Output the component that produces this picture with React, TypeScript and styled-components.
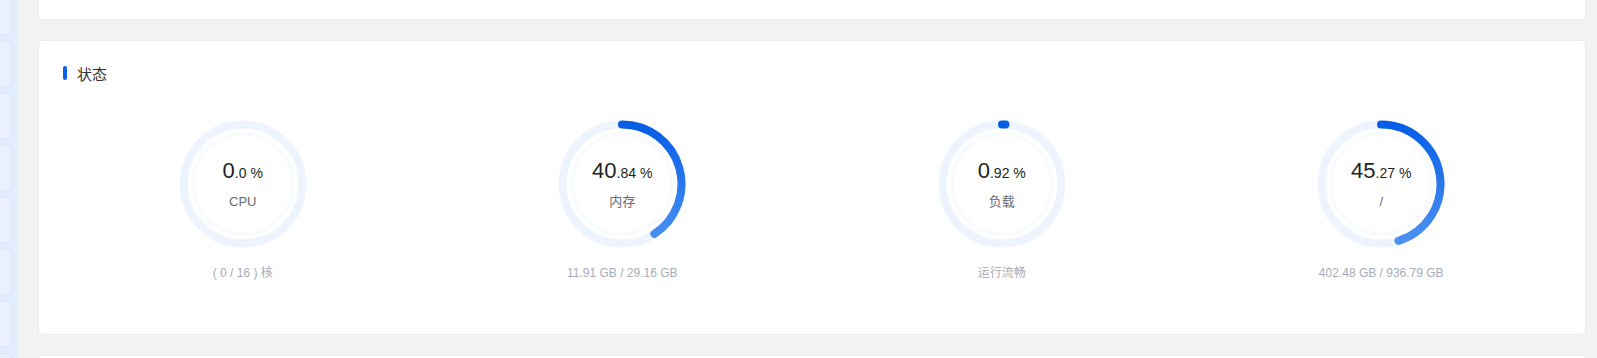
import styled, { createGlobalStyle } from 'styled-components';

const GlobalStyle = createGlobalStyle`
  html, body {
    margin: 0;
    padding: 0;
    background: #f2f2f3;
    font-family: "Liberation Sans", Arial, "Noto Sans CJK SC", sans-serif;
    overflow: hidden;
  }
`;

type Gauge = {
  whole: string;
  fraction: string;
  percent: number;
  label: string;
  detail: string;
};

const gauges: Gauge[] = [
  { whole: '0', fraction: '.0', percent: 0, label: 'CPU', detail: '( 0 / 16 ) 核' },
  { whole: '40', fraction: '.84', percent: 40.84, label: '内存', detail: '11.91 GB / 29.16 GB' },
  { whole: '0', fraction: '.92', percent: 0.92, label: '负载', detail: '运行流畅' },
  { whole: '45', fraction: '.27', percent: 45.27, label: '/', detail: '402.48 GB / 936.79 GB' },
];

const R = 59.5;
const C = 64;

// arc from 12 o'clock, clockwise
const arcPath = (percent: number) => {
  const a = (percent / 100) * 2 * Math.PI;
  const x = C + R * Math.sin(a);
  const y = C - R * Math.cos(a);
  const large = percent > 50 ? 1 : 0;
  return `M ${C} ${C - R} A ${R} ${R} 0 ${large} 1 ${x.toFixed(2)} ${y.toFixed(2)}`;
};

const Ring = ({ percent, id }: { percent: number; id: string }) => (
  <svg width="128" height="128" viewBox="0 0 128 128">
    <defs>
      <linearGradient id={id} x1="0" y1="4" x2="0" y2="124" gradientUnits="userSpaceOnUse">
        <stop offset="0" stopColor="#075de6" />
        <stop offset="1" stopColor="#4d93f2" />
      </linearGradient>
    </defs>
    <circle cx={C} cy={C} r={R} fill="none" stroke="#eef4fd" strokeWidth="8" />
    <circle cx={C} cy={C} r="50" fill="none" stroke="#f7faff" strokeWidth="3" />
    {percent > 0 && (
      <path
        d={arcPath(percent)}
        fill="none"
        stroke={`url(#${id})`}
        strokeWidth="8"
        strokeLinecap="round"
      />
    )}
  </svg>
);

const App = () => (
  <>
    <GlobalStyle />
    <Page>
      <Sidebar>
        {Array.from({ length: 8 }).map((_, i) => (
          <SideItem key={i} />
        ))}
      </Sidebar>
      <Main>
        <TopCard />
        <Card>
          <Title>
            <TitleBar />
            状态
          </Title>
          <GaugeGrid>
            {gauges.map((g, i) => (
              <GaugeCell key={g.label}>
                <Dial>
                  <Ring percent={g.percent} id={`ring-${i}`} />
                  <Readout>
                    <Value>
                      <Big>{g.whole}</Big>
                      <Small>{g.fraction} %</Small>
                    </Value>
                    <Label>{g.label}</Label>
                  </Readout>
                </Dial>
                <Detail>{g.detail}</Detail>
              </GaugeCell>
            ))}
          </GaugeGrid>
        </Card>
        <Card />
      </Main>
    </Page>
  </>
);

const Page = styled.div`
  display: flex;
  height: 358px;
  overflow: hidden;
`;

const Sidebar = styled.div`
  width: 18px;
  flex-shrink: 0;
  background: #e2ecfc;
  display: flex;
  flex-direction: column;
  gap: 6px;
  margin-top: -11px;
  padding-right: 7px;
  box-sizing: border-box;
`;

const SideItem = styled.div`
  height: 46px;
  flex-shrink: 0;
  background: #ebf2fe;
  border: 1px solid #dce7fa;
  border-left: none;
  border-radius: 0 4px 4px 0;
  box-sizing: border-box;
`;

const Main = styled.div`
  flex: 1;
  display: flex;
  flex-direction: column;
  gap: 20px;
  padding: 0 11px 0 20px;
  min-width: 0;
`;

const TopCard = styled.div`
  height: 20px;
  flex-shrink: 0;
  background: #fff;
  border: 1px solid #e9ebf0;
  border-top: none;
  border-radius: 0 0 4px 4px;
  box-sizing: border-box;
`;

const Card = styled.div`
  background: #fff;
  border: 1px solid #e9ebf0;
  border-radius: 4px;
  padding: 20px 24px 52px;
  flex-shrink: 0;
  min-height: 40px;
`;

const Title = styled.div`
  display: flex;
  align-items: center;
  gap: 10px;
  height: 24px;
  font-size: 15px;
  color: #303133;
`;

const TitleBar = styled.span`
  width: 4px;
  height: 14px;
  border-radius: 2px;
  background: #0b63e8;
`;

const GaugeGrid = styled.div`
  display: grid;
  grid-template-columns: repeat(4, 1fr);
  margin: 35px -10px 0;
`;

const GaugeCell = styled.div`
  display: flex;
  flex-direction: column;
  align-items: center;
`;

const Dial = styled.div`
  display: grid;
  place-items: center;
  & > * {
    grid-area: 1 / 1;
  }
`;

const Readout = styled.div`
  display: flex;
  flex-direction: column;
  align-items: center;
  gap: 7px;
  margin-top: 0;
`;

const Value = styled.div`
  line-height: 26px;
  color: #1d1f23;
  white-space: nowrap;
`;

const Big = styled.span`
  font-size: 22px;
`;

const Small = styled.span`
  font-size: 14px;
`;

const Label = styled.div`
  font-size: 13px;
  line-height: 18px;
  color: #646a73;
`;

const Detail = styled.div`
  margin-top: 16px;
  font-size: 12px;
  line-height: 18px;
  color: #a8abb5;
`;

export default App;
